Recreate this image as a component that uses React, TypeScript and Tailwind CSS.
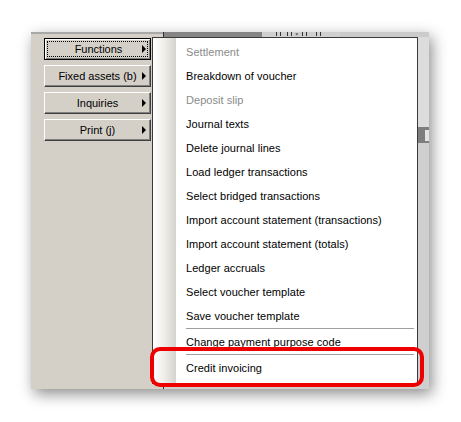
import React from 'react';

const FONT = { fontFamily: '"Liberation Sans", Arial, sans-serif' };

type MenuItem = { label: string; disabled?: boolean } | 'sep';

const MENU_ITEMS: MenuItem[] = [
  { label: 'Settlement', disabled: true },
  { label: 'Breakdown of voucher' },
  { label: 'Deposit slip', disabled: true },
  { label: 'Journal texts' },
  { label: 'Delete journal lines' },
  { label: 'Load ledger transactions' },
  { label: 'Select bridged transactions' },
  { label: 'Import account statement (transactions)' },
  { label: 'Import account statement (totals)' },
  { label: 'Ledger accruals' },
  { label: 'Select voucher template' },
  { label: 'Save voucher template' },
  'sep',
  { label: 'Change payment purpose code' },
  'sep',
  { label: 'Credit invoicing' },
];

const BUTTONS = ['Functions', 'Fixed assets (b)', 'Inquiries', 'Print (j)'];

const Arrow = () => (
  <span className="absolute right-[4px] top-1/2 -translate-y-1/2 w-0 h-0 border-y-[4px] border-y-transparent border-l-[4px] border-l-black" />
);

const SideButton: React.FC<{ label: string; focused?: boolean }> = ({ label, focused }) => {
  if (focused) {
    return (
      <div className="relative h-[22px] w-[107px] border border-black bg-[#d4d0c8] shadow-[inset_1px_1px_0_#ffffff,inset_-1px_-1px_0_#808080]">
        <div className="absolute inset-[2px] border border-dotted border-black flex items-center justify-center text-[11px] text-black pl-[2px]">
          {label}
        </div>
        <Arrow />
      </div>
    );
  }
  return (
    <div className="relative h-[22px] w-[107px] border-t border-l border-t-white border-l-white border-b border-r border-b-[#404040] border-r-[#404040] bg-[#d4d0c8] shadow-[inset_-1px_-1px_0_#808080] flex items-center justify-center text-[11px] text-black">
      {label}
      <Arrow />
    </div>
  );
};

const PopupMenu = () => (
  <div className="absolute left-[121px] top-[5px] w-[266px] bg-white border border-[#3a3a3a] flex">
    <div className="w-[23px] bg-gradient-to-r from-white via-[#eeede9] to-[#d6d3cd]" />
    <div className="flex-1 pt-[2px] pb-[3px]">
      {MENU_ITEMS.map((item, i) =>
        item === 'sep' ? (
          <div key={i} className="h-[2px] ml-[10px] mr-[3px] flex items-start">
            <div className="h-px w-full bg-[#a0a0a0]" />
          </div>
        ) : (
          <div
            key={i}
            className={`h-[24px] pl-[10px] flex items-center text-[11px] tracking-[0.05px] whitespace-nowrap ${
              item.disabled ? 'text-[#8a8a8a]' : 'text-black'
            }`}
          >
            {item.label}
          </div>
        )
      )}
    </div>
  </div>
);

export default function App() {
  return (
    <div className="relative w-[461px] h-[422px] bg-white overflow-hidden" style={FONT}>
      <div className="pt-[32px] pl-[31px]">
        <div className="relative w-[398px] h-[357px] bg-[#d4d0c8] flex shadow-[3px_5px_14px_rgba(0,0,0,0.45)]">
          {/* left button panel */}
          <div className="w-[132px] flex flex-col">
            <div className="h-[2px] bg-[#a8a8a8]" />
            <div className="pl-[13px] pt-[4px] flex flex-col gap-[5px]">
              {BUTTONS.map((b, i) => (
                <SideButton key={b} label={b} focused={i === 0} />
              ))}
            </div>
          </div>

          {/* right pane behind the menu */}
          <div className="flex-1 flex flex-col border-l border-[#303030]">
            <div className="h-[5px] flex">
              <div className="w-[98px] bg-[#858585]" />
              <div className="w-[78px] bg-[#d0d0d0] flex items-start gap-[3px] pl-[14px]">
                <div className="w-px h-[4px] bg-[#333]" />
                <div className="w-px h-[4px] bg-[#333]" />
                <div className="w-px h-[4px] bg-[#333] ml-[3px]" />
                <div className="w-px h-[4px] bg-[#333]" />
                <div className="text-[6px] leading-[5px] text-[#333]">×</div>
                <div className="w-px h-[4px] bg-[#333]" />
                <div className="w-px h-[4px] bg-[#333]" />
                <div className="w-px h-[4px] bg-[#333] ml-[6px]" />
                <div className="w-px h-[4px] bg-[#333]" />
              </div>
              <div className="flex-1 bg-[#cbcbcb]" />
            </div>
            <div className="flex-1 flex">
              <div className="flex-1 bg-[#d4d0c8]" />
              <div className="w-[11px] bg-[#cfcfcf] flex flex-col">
                <div className="h-[90px] bg-[#dcdcdc]" />
                <div className="h-[16px] bg-[#7e7e7e] flex items-center justify-end">
                  <div className="w-[4px] h-[11px] bg-[#e4e4e4]" />
                </div>
                <div className="flex-1" />
              </div>
            </div>
          </div>

          <PopupMenu />
        </div>
      </div>

      {/* highlight around the last entry */}
      <div className="absolute left-[150px] top-[347px] w-[274px] h-[40px] rounded-[10px] border-[4px] border-[#ee0000]" />
    </div>
  );
}
